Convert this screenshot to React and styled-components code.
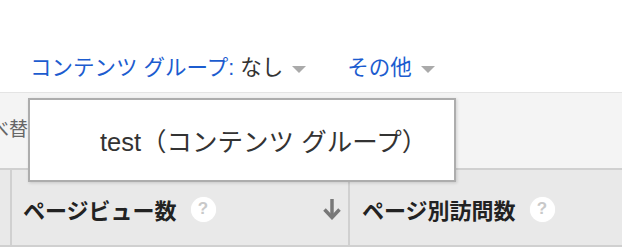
import React from "react";
import styled, { createGlobalStyle } from "styled-components";

const Global = createGlobalStyle`
  html, body { margin: 0; padding: 0; background: #fff; }
  body { font-family: "Liberation Sans", "Noto Sans CJK JP", sans-serif; overflow: hidden; }
`;

const Page = styled.div`
  position: relative;
  width: 622px;
  height: 248px;
  overflow: hidden;
`;

const MenuBar = styled.div`
  height: 92px;
  box-sizing: border-box;
  padding: 43px 0 0 30px;
  display: flex;
  align-items: center;
  gap: 41px;
`;

const MenuItem = styled.div`
  display: flex;
  align-items: center;
  font-size: 21.5px;
  line-height: 30px;
  color: #1c5ccf;
  white-space: nowrap;
`;

const Value = styled.span`
  color: #333;
  margin-left: 6px;
`;

const Caret = styled.span`
  display: inline-block;
  width: 0;
  height: 0;
  border-left: 7.5px solid transparent;
  border-right: 7.5px solid transparent;
  border-top: 7px solid #aaa;
  margin-left: 9px;
  margin-top: 4px;
`;

const Toolbar = styled.div`
  height: 76px;
  box-sizing: border-box;
  border-top: 1px solid #e4e4e4;
  background: #f4f4f4;
  display: flex;
  align-items: center;
  overflow: hidden;
`;

const ToolLabel = styled.span`
  font-size: 19px;
  color: #666;
  margin-left: -29px;
  margin-top: -6px;
  white-space: nowrap;
`;

const HeaderRow = styled.div`
  height: 79px;
  box-sizing: border-box;
  border-top: 2px solid #d0d0d0;
  border-bottom: 2px solid #d0d0d0;
  background: #e9e9e9;
  display: flex;
`;

const Cell = styled.div`
  width: ${(p) => p.$w}px;
  flex: ${(p) => (p.$w ? "none" : "1")};
  box-sizing: border-box;
  border-right: ${(p) => (p.$last ? "none" : "2px solid #d0d0d0")};
  display: flex;
  align-items: center;
  padding: 3px ${(p) => p.$pr || 0}px 0 ${(p) => p.$pl || 0}px;
  font-size: 22px;
  font-weight: bold;
  color: #222;
  white-space: nowrap;
`;

const Help = styled.span`
  display: inline-flex;
  align-items: center;
  justify-content: center;
  width: 25px;
  height: 25px;
  border-radius: 50%;
  background: #fff;
  box-shadow: 0 0 1px rgba(255, 255, 255, 0.8);
  color: #c9c9c9;
  font-family: "Liberation Sans", sans-serif;
  font-size: 17px;
  font-weight: bold;
  margin-left: ${(p) => p.$ml}px;
`;

const Spacer = styled.span`
  flex: 1;
`;

const Popup = styled.div`
  position: absolute;
  left: 28px;
  top: 98px;
  width: 428px;
  height: 84px;
  box-sizing: border-box;
  background: #fff;
  border: 2px solid #adadad;
  box-shadow: 1px 1px 3px rgba(0, 0, 0, 0.15);
  display: flex;
  align-items: center;
  padding: 0 0 2px 70px;
  font-size: 25.5px;
  color: #333;
  white-space: nowrap;
`;

const DownArrow = () => (
  <svg width="20" height="22" viewBox="0 0 20 22">
    <path d="M10 1 V19" stroke="#787878" strokeWidth="3.5" fill="none" />
    <path d="M2.5 11.5 L10 19.5 L17.5 11.5" stroke="#787878" strokeWidth="3.5" fill="none" />
  </svg>
);

export default function App() {
  return (
    <Page>
      <Global />
      <MenuBar>
        <MenuItem>
          コンテンツ グループ:<Value>なし</Value>
          <Caret />
        </MenuItem>
        <MenuItem>
          その他
          <Caret />
        </MenuItem>
      </MenuBar>
      <Toolbar>
        <ToolLabel>並べ替え</ToolLabel>
      </Toolbar>
      <HeaderRow>
        <Cell $w={12} />
        <Cell $w={338} $pl={11} $pr={6}>
          ページビュー数
          <Help $ml={14}>?</Help>
          <Spacer />
          <DownArrow />
        </Cell>
        <Cell $last $pl={12}>
          ページ別訪問数
          <Help $ml={14}>?</Help>
        </Cell>
      </HeaderRow>
      <Popup>test（コンテンツ グループ）</Popup>
    </Page>
  );
}
